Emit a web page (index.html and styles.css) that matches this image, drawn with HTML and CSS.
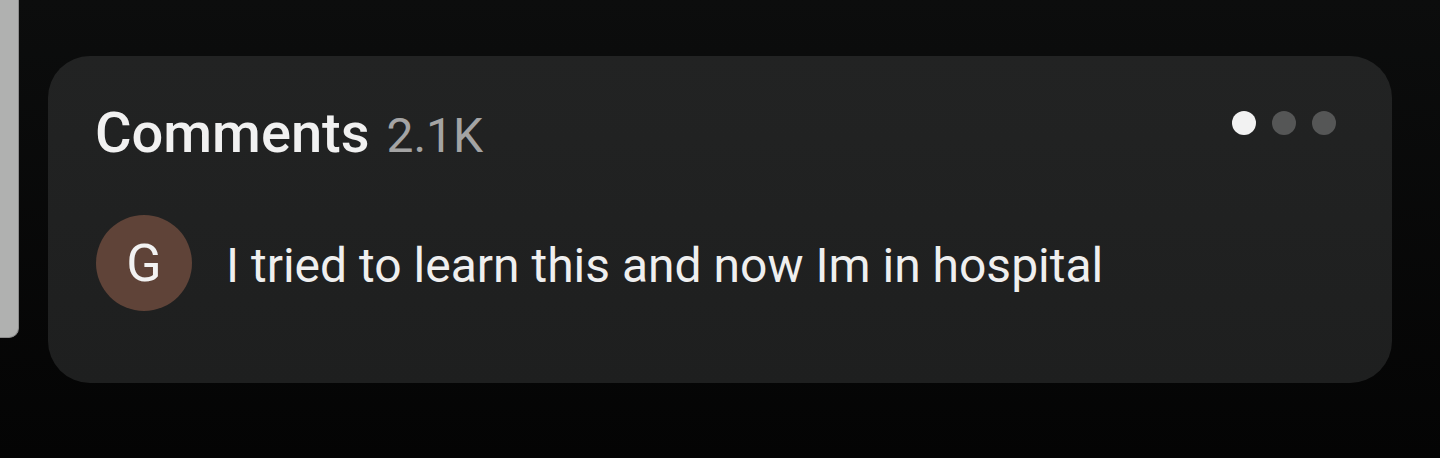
FILE: index.html
```html
<!DOCTYPE html>
<html lang="en">
<head>
  <meta charset="UTF-8" />
  <meta name="viewport" content="width=device-width, initial-scale=1.0"/>
  <title>Comments</title>
  <link rel="stylesheet" href="styles.css">
</head>
<body>
  <div class="side-panel"></div>

  <div class="card">
    <div class="card-head">
      <h2 class="title">Comments <span class="count">2.1K</span></h2>
      <div class="dots">
        <span class="dot active"></span>
        <span class="dot"></span>
        <span class="dot"></span>
      </div>
    </div>

    <div class="comment">
      <div class="avatar">G</div>
      <p class="comment-text">I tried to learn this and now Im in hospital</p>
    </div>
  </div>
</body>
</html>
```

FILE: styles.css
```css
html, body { height: 100%; }
body {
  margin: 0;
  font-family: Roboto, "Liberation Sans", sans-serif;
  background: linear-gradient(#0c0d0d, #040404);
  display: flex;
  align-items: flex-start;
  gap: 29px;
  overflow: hidden;
}
.side-panel {
  width: 18px;
  height: 337px;
  flex: none;
  background: #b0b1b0;
  border-right: 1px solid #8c8c8c;
  border-bottom: 1px solid #8c8c8c;
  border-bottom-right-radius: 10px;
}
.card {
  margin-top: 56px;
  width: 1344px;
  height: 327px;
  box-sizing: border-box;
  padding: 49px 56px 0 47px;
  border-radius: 42px;
  background: linear-gradient(#222323, #1e1f1f);
}
.card-head { display: flex; justify-content: space-between; align-items: flex-start; }
.title {
  margin: 0;
  font-size: 56px;
  line-height: 1;
  font-weight: 500;
  color: #f1f1f1;
  word-spacing: 3px;
}
.count { font-size: 48px; font-weight: 400; color: #a4a4a4; }
.dots { display: flex; gap: 16px; margin-top: 6px; }
.dot { width: 24px; height: 24px; border-radius: 50%; background: #555656; }
.dot.active { background: #f2f2f2; }
.comment {
  display: flex;
  align-items: center;
  gap: 34px;
  margin-top: 54px;
}
.avatar {
  width: 96px;
  height: 96px;
  margin-left: 1px;
  border-radius: 50%;
  background: #5f4338;
  color: #f2f2f2;
  font-size: 52px;
  display: flex;
  align-items: center;
  justify-content: center;
}
.comment-text {
  margin: 0;
  padding-top: 5px;
  font-size: 48px;
  line-height: 1;
  color: #efefef;
}
```
